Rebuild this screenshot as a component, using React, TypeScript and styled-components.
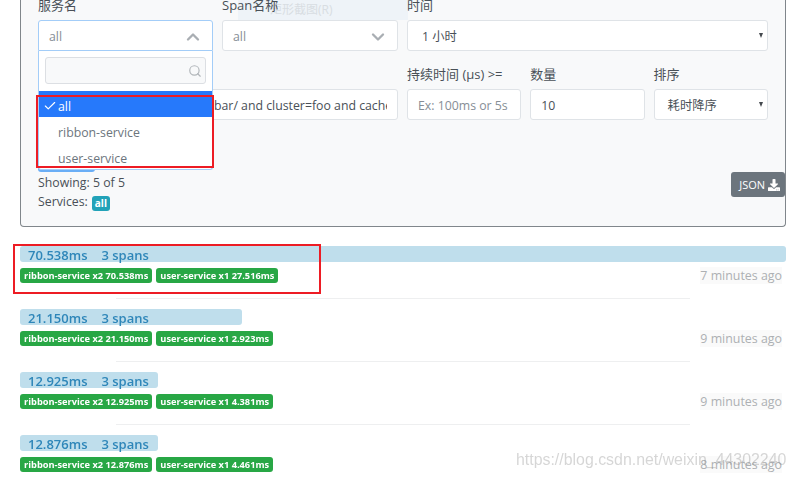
import { Check, ChevronDown, ChevronUp, Search } from "lucide-react";
import { FaDownload } from "react-icons/fa";
import styled, { createGlobalStyle } from "styled-components";

const GlobalStyle = createGlobalStyle`
  html, body {
    margin: 0;
    padding: 0;
    background: #fff;
    overflow: hidden;
  }
  body {
    width: 797px;
    height: 478px;
    font-family: "Open Sans", "Noto Sans CJK SC", sans-serif;
    font-size: 12.3px;
    color: #495057;
  }
`;

const Page = styled.div`
  position: relative;
  width: 797px;
  height: 478px;
  overflow: hidden;
  filter: blur(0.3px);
`;

const FilterPanel = styled.section`
  box-sizing: border-box;
  width: 766px;
  height: 240px;
  margin: -13px 0 0 20px;
  padding: 8px 17px 0;
  background: #f8f9fa;
  border: 1px solid #80868b;
  border-top: none;
  border-radius: 0 0 4px 4px;
`;

const FieldRow = styled.div`
  display: flex;
  gap: 9px;
  height: 56px;
  margin-bottom: 13px;
`;

const Field = styled.div<{ $width: number }>`
  position: relative;
  flex: 0 0 ${(p) => p.$width}px;
  width: ${(p) => p.$width}px;
`;

const Label = styled.label`
  position: relative;
  z-index: 2;
  display: block;
  height: 25px;
  font-size: 13px;
  line-height: 20px;
  white-space: nowrap;
`;

const Control = styled.div<{ $open?: boolean; $muted?: boolean }>`
  box-sizing: border-box;
  display: flex;
  align-items: center;
  justify-content: space-between;
  height: 31px;
  padding: 2px 10px 0;
  background: #fff;
  border: 1px solid ${(p) => (p.$open ? "#a3cdf8" : "#dfe3e7")};
  border-radius: ${(p) => (p.$open ? "3px 3px 0 0" : "3px")};
  color: ${(p) => (p.$muted ? "#868e96" : "#495057")};
  font-size: 12.3px;
  white-space: nowrap;
  overflow: hidden;
  svg {
    flex: none;
    color: #a9aeb3;
    margin-right: -1px;
  }
`;

const QueryText = styled.span`
  margin-left: 165px;
  overflow: hidden;
  white-space: nowrap;
  text-overflow: clip;
`;

const Caret = styled.span`
  width: 0;
  height: 0;
  margin: -2px -6px 0 0;
  border-left: 2.5px solid transparent;
  border-right: 2.5px solid transparent;
  border-top: 5px solid #44494e;
`;

const SelectValue = styled.span<{ $inset: number }>`
  margin: -2px 0 0 ${(p) => p.$inset}px;
`;

const Dropdown = styled.div`
  position: absolute;
  z-index: 2;
  top: 56px;
  left: 0;
  box-sizing: border-box;
  width: 175px;
  height: 119px;
  background: #fff;
  border: 1px solid #a3cdf8;
  border-top: none;
  border-radius: 0 0 3px 3px;
`;

const SearchBox = styled.div`
  box-sizing: border-box;
  display: flex;
  align-items: center;
  justify-content: flex-end;
  height: 27px;
  margin: 6px 6px 7px;
  padding-right: 3px;
  background: #f8f9fa;
  border: 1px solid #dcdfe3;
  border-radius: 3px;
  color: #b1b6ba;
`;

const OptionItem = styled.div<{ $active?: boolean }>`
  position: relative;
  box-sizing: border-box;
  height: 26px;
  padding-left: 19px;
  line-height: 31px;
  font-size: 12.3px;
  color: ${(p) => (p.$active ? "#fff" : "#6c757d")};
  background: ${(p) => (p.$active ? "#2679fb" : "transparent")};
  svg {
    position: absolute;
    left: 4px;
    top: 8px;
  }
`;

const SearchButton = styled.div`
  width: 57px;
  height: 22px;
  margin-top: 30px;
  border-radius: 3px;
  background: #6aaef6;
`;

const Footer = styled.div`
  display: flex;
  align-items: flex-start;
  justify-content: space-between;
  margin-right: -17px;
`;

const Summary = styled.div`
  font-size: 12.3px;
  line-height: 19px;
  padding-top: 1px;
`;

const ServiceBadge = styled.span`
  display: inline-block;
  margin-left: 4px;
  padding: 0 3px;
  height: 15px;
  line-height: 14px;
  vertical-align: -1px;
  font-size: 10px;
  font-weight: 700;
  color: #fff;
  background: #22a2b8;
  border-radius: 3px;
`;

const JsonButton = styled.div`
  display: flex;
  align-items: center;
  gap: 3px;
  box-sizing: border-box;
  height: 25px;
  padding: 0 5px 0 8px;
  font-size: 11px;
  color: #fff;
  background: #6c757d;
  border-radius: 3px;
`;

const TraceList = styled.div`
  margin: 19px 11px 0 20px;
`;

const TraceRow = styled.article`
  position: relative;
  height: 63px;
`;

const DurationBar = styled.div<{ $width: number }>`
  box-sizing: border-box;
  display: flex;
  gap: 14px;
  width: ${(p) => p.$width}px;
  height: 16px;
  padding-left: 8px;
  line-height: 18px;
  font-size: 13px;
  font-weight: 600;
  white-space: nowrap;
  color: #2e86b9;
  background: #bfdeec;
  border-radius: 3px;
`;

const TagRow = styled.div`
  display: flex;
  gap: 4px;
  margin-top: 6px;
`;

const ServiceTag = styled.span`
  height: 15px;
  padding: 0 4px;
  line-height: 16px;
  font-size: 9.25px;
  font-weight: 700;
  white-space: nowrap;
  color: #fff;
  background: #28a745;
  border-radius: 3px;
`;

const Divider = styled.hr`
  width: 574px;
  height: 1px;
  margin: 15px 0 0 96px;
  border: none;
  background: #eeeff0;
`;

const TimeAgo = styled.span`
  position: absolute;
  top: 21px;
  right: 4px;
  height: 17px;
  line-height: 17px;
  font-size: 12.4px;
  color: #adb0b3;
  background: #fafafa;
`;

const RedBox = styled.div<{ $x: number; $y: number; $w: number; $h: number }>`
  position: absolute;
  z-index: 3;
  box-sizing: border-box;
  left: ${(p) => p.$x}px;
  top: ${(p) => p.$y}px;
  width: ${(p) => p.$w}px;
  height: ${(p) => p.$h}px;
  border: 2px solid #ed1c24;
  pointer-events: none;
`;

const Watermark = styled.span`
  position: absolute;
  z-index: 3;
  left: 516px;
  top: 450px;
  font-family: "Liberation Sans", sans-serif;
  font-size: 15.9px;
  line-height: 20px;
  color: rgba(120, 120, 120, 0.3);
  white-space: nowrap;
`;

const CaptureHint = styled.div`
  position: absolute;
  z-index: 1;
  left: 238px;
  top: 0;
  width: 170px;
  height: 20px;
  padding-left: 32px;
  box-sizing: border-box;
  font-size: 12px;
  line-height: 20px;
  color: #d8dde2;
  background: #eef3f8;
`;

const traces = [
  { total: "70.538ms", width: 766, user: "user-service x1 27.516ms", ago: "7 minutes ago" },
  { total: "21.150ms", width: 222, user: "user-service x1 2.923ms", ago: "9 minutes ago" },
  { total: "12.925ms", width: 138, user: "user-service x1 4.381ms", ago: "9 minutes ago" },
  { total: "12.876ms", width: 138, user: "user-service x1 4.461ms", ago: "8 minutes ago" },
];

export default function App() {
  return (
    <Page>
      <GlobalStyle />
      <CaptureHint>矩形截图(R)</CaptureHint>
      <FilterPanel>
        <FieldRow>
          <Field $width={175}>
            <Label>服务名</Label>
            <Control $open $muted>
              all
              <ChevronUp size={20} strokeWidth={2.8} />
            </Control>
            <Dropdown>
              <SearchBox>
                <Search size={14} />
              </SearchBox>
              <OptionItem $active>
                <Check size={14} strokeWidth={2} />
                all
              </OptionItem>
              <OptionItem>ribbon-service</OptionItem>
              <OptionItem>user-service</OptionItem>
            </Dropdown>
          </Field>
          <Field $width={176}>
            <Label>Span名称</Label>
            <Control $muted>
              all
              <ChevronDown size={20} strokeWidth={2.8} />
            </Control>
          </Field>
          <Field $width={361}>
            <Label>时间</Label>
            <Control>
              <SelectValue $inset={4}>1 小时</SelectValue>
              <Caret />
            </Control>
          </Field>
        </FieldRow>
        <FieldRow>
          <Field $width={360}>
            <Label />
            <Control>
              <QueryText>bar/ and cluster=foo and cache</QueryText>
            </Control>
          </Field>
          <Field $width={114.3}>
            <Label>持续时间 (μs) &gt;=</Label>
            <Control $muted>Ex: 100ms or 5s</Control>
          </Field>
          <Field $width={114.3}>
            <Label>数量</Label>
            <Control>10</Control>
          </Field>
          <Field $width={114.4}>
            <Label>排序</Label>
            <Control>
              <SelectValue $inset={3}>耗时降序</SelectValue>
              <Caret />
            </Control>
          </Field>
        </FieldRow>
        <SearchButton />
        <Footer>
          <Summary>
            Showing: 5 of 5
            <br />
            Services:<ServiceBadge>all</ServiceBadge>
          </Summary>
          <JsonButton>
            JSON <FaDownload size={12} />
          </JsonButton>
        </Footer>
      </FilterPanel>
      <TraceList>
        {traces.map((t) => (
          <TraceRow key={t.total}>
            <DurationBar $width={t.width}>
              <span>{t.total}</span>
              <span>3 spans</span>
            </DurationBar>
            <TagRow>
              <ServiceTag>ribbon-service x2 {t.total}</ServiceTag>
              <ServiceTag>{t.user}</ServiceTag>
            </TagRow>
            <Divider />
            <TimeAgo>{t.ago}</TimeAgo>
          </TraceRow>
        ))}
      </TraceList>
      <RedBox $x={36} $y={95} $w={178} $h={73} />
      <RedBox $x={13} $y={244} $w={308} $h={50} />
      <Watermark>https://blog.csdn.net/weixin_44302240</Watermark>
    </Page>
  );
}
